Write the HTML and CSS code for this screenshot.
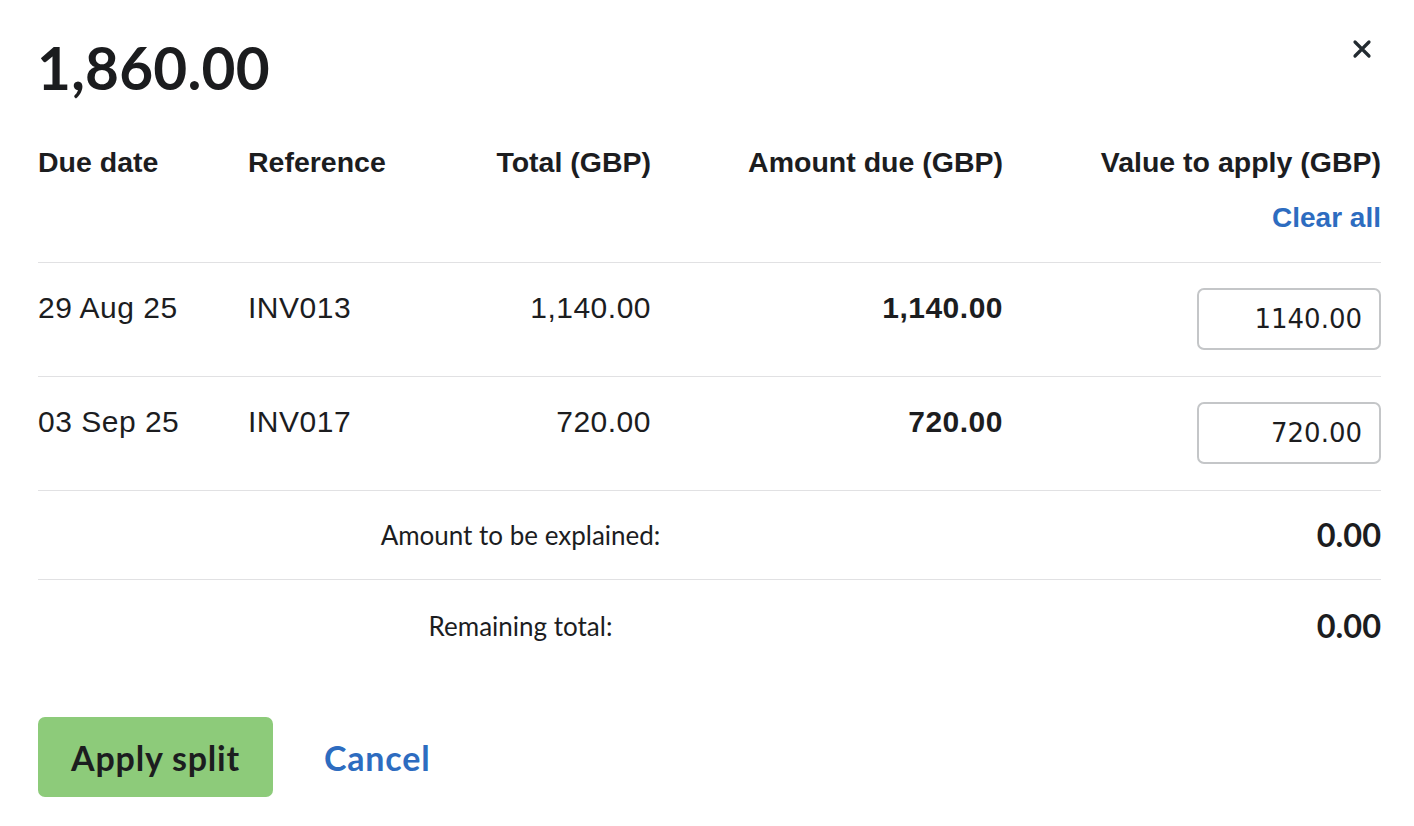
FILE: index.html
```html
<!DOCTYPE html>
<html lang="en">
<head>
<meta charset="utf-8">
<title>Split payment</title>
<link rel="stylesheet" href="styles.css">
</head>
<body>
<div class="modal">
  <div class="title-row">
    <h1 class="title">1,860.00</h1>
    <button class="close" aria-label="Close">
      <svg width="20" height="20" viewBox="0 0 20 20"><path d="M3 3 L17 17 M17 3 L3 17" stroke="#232b31" stroke-width="3.2" stroke-linecap="round"/></svg>
    </button>
  </div>

  <div class="grid">
    <div class="hcell">Due date</div>
    <div class="hcell">Reference</div>
    <div class="hcell right">Total (GBP)</div>
    <div class="hcell right">Amount due (GBP)</div>
    <div class="hcell right last">
      <div>Value to apply (GBP)</div>
      <a class="clear" href="#">Clear all</a>
    </div>

    <div class="cell">29 Aug 25</div>
    <div class="cell">INV013</div>
    <div class="cell right">1,140.00</div>
    <div class="cell right strong">1,140.00</div>
    <div class="cell input-cell"><input class="amount" value="1140.00"></div>

    <div class="cell">03 Sep 25</div>
    <div class="cell">INV017</div>
    <div class="cell right">720.00</div>
    <div class="cell right strong">720.00</div>
    <div class="cell input-cell"><input class="amount" value="720.00"></div>

    <div class="slabel">Amount to be explained:</div>
    <div class="svalue">0.00</div>

    <div class="slabel second">Remaining total:</div>
    <div class="svalue second">0.00</div>
  </div>

  <div class="actions">
    <button class="apply">Apply split</button>
    <a class="cancel" href="#">Cancel</a>
  </div>
</div>
</body>
</html>
```

FILE: styles.css
```css
* { box-sizing: border-box; }
html, body { margin: 0; padding: 0; background: #fff; }
body { color: #1c1d1f; font-family: "Liberation Sans", Arial, sans-serif; }

.modal { padding: 38px 33px 0 38px; }

.title-row { display: flex; justify-content: space-between; align-items: flex-start; }
.title {
  margin: 0 0 0 -1px;
  font-family: Lato, "Open Sans", sans-serif;
  font-weight: 700;
  font-size: 58.5px;
  line-height: 58px;
  letter-spacing: 0.2px;
  color: #1b1c1e;
}
.close {
  border: 0; background: none; padding: 0; margin: 1px 9px 0 0;
  width: 20px; height: 20px; cursor: pointer; display: block;
}
.close svg { display: block; }

.grid {
  margin-top: 48px;
  display: grid;
  grid-template-columns: 210px 202px 201px 352px 1fr;
}
.hcell {
  font-weight: 700; font-size: 28.5px; line-height: 36px;
  padding-bottom: 26px;
  border-bottom: 1px solid #e1e1e3;
}
.hcell.last { display: flex; flex-direction: column; align-items: flex-end; }
.right { text-align: right; }
.clear {
  margin-top: 20px;
  color: #2d6cc0; text-decoration: none; font-weight: 700;
  font-size: 28px; line-height: 36px;
}

.cell {
  font-size: 30px; line-height: 36px;
  padding: 27px 0 0;
  border-bottom: 1px solid #e1e1e3;
  letter-spacing: 0.5px;
}
.cell.strong { font-weight: 700; }
.cell.input-cell { padding: 25px 0 26px; display: flex; justify-content: flex-end; }
.amount {
  display: block;
  width: 184px; height: 62px;
  border: 2px solid #c4c6c8; border-radius: 7px;
  padding: 0 17px 0 8px;
  text-align: right;
  font-family: "DejaVu Sans", Verdana, sans-serif;
  font-size: 26px; color: #1c1d1f;
  background: #fff; outline: none;
}

.slabel {
  grid-column: 1 / 5;
  text-align: center;
  font-family: Lato, "Open Sans", sans-serif;
  font-size: 26px; line-height: 36px;
  padding: 26px 0;
  border-bottom: 1px solid #e1e1e3;
}
.svalue {
  text-align: right;
  font-family: Lato, "Open Sans", sans-serif;
  font-weight: 700; font-size: 32.5px; line-height: 36px;
  padding: 26px 0;
  border-bottom: 1px solid #e1e1e3;
}
.slabel.second, .svalue.second { border-bottom: 0; padding: 28px 0 24px; }

.actions { display: flex; align-items: center; margin-top: 49px; }
.apply {
  width: 235px; height: 80px;
  border: 0; border-radius: 7px;
  background: #8dcb7a;
  font-family: Lato, "Open Sans", sans-serif;
  font-weight: 700; font-size: 34px; letter-spacing: 0.8px; color: #1c1d1f;
  cursor: pointer;
  padding: 0;
}
.cancel {
  margin-left: 51px;
  font-family: Lato, "Open Sans", sans-serif;
  font-weight: 700; font-size: 34px; letter-spacing: 0.8px;
  color: #2d6cc0; text-decoration: none;
}
```
